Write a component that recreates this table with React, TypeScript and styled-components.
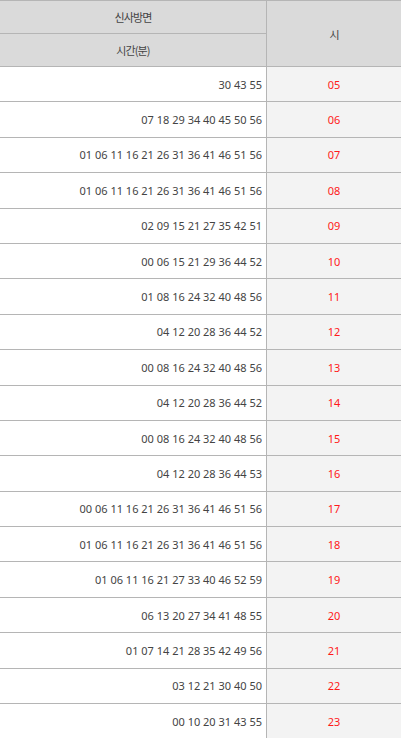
import React from 'react'
import styled, { createGlobalStyle } from 'styled-components'

const GlobalStyle = createGlobalStyle`
    html, body {
        margin: 0;
        padding: 0;
        background: #ffffff;
    }
    body {
        font-family: "Noto Sans", "Noto Sans CJK KR", sans-serif;
    }
`

const Table = styled.div`
    width: 401px;
    border-top: 1px solid #b5b5b5;
    color: #444;
`

const Head = styled.div`
    display: grid;
    grid-template-columns: 267px 1fr;
    grid-template-rows: 33px 33px;
    background-color: #dadada;
`

const HeadCell = styled.div<{ $span?: boolean }>`
    display: flex;
    align-items: center;
    justify-content: center;
    border-bottom: 1px solid #b5b5b5;
    font-family: "Noto Sans CJK KR", sans-serif;
    font-size: 11px;
    letter-spacing: -0.9px;
    color: #444;
    ${p => p.$span ? 'grid-row: 1 / span 2; grid-column: 2;' : 'border-right: 1px solid #b5b5b5; grid-column: 1;'}
`

const Row = styled.div`
    display: grid;
    grid-template-columns: 267px 1fr;
    height: 35.4px;
    box-sizing: border-box;
    border-bottom: 1px solid #b5b5b5;
`

const Minutes = styled.div`
    display: flex;
    align-items: center;
    justify-content: flex-end;
    padding-right: 4px;
    border-right: 1px solid #b5b5b5;
    font-size: 11px;
    color: #444;
    white-space: nowrap;
`

const Hour = styled.div`
    display: flex;
    align-items: center;
    justify-content: center;
    background-color: #f3f3f3;
    font-size: 11px;
    color: #ff1a1a;
`

const rows: [string, string][] = [
    ['05', '30 43 55'],
    ['06', '07 18 29 34 40 45 50 56'],
    ['07', '01 06 11 16 21 26 31 36 41 46 51 56'],
    ['08', '01 06 11 16 21 26 31 36 41 46 51 56'],
    ['09', '02 09 15 21 27 35 42 51'],
    ['10', '00 06 15 21 29 36 44 52'],
    ['11', '01 08 16 24 32 40 48 56'],
    ['12', '04 12 20 28 36 44 52'],
    ['13', '00 08 16 24 32 40 48 56'],
    ['14', '04 12 20 28 36 44 52'],
    ['15', '00 08 16 24 32 40 48 56'],
    ['16', '04 12 20 28 36 44 53'],
    ['17', '00 06 11 16 21 26 31 36 41 46 51 56'],
    ['18', '01 06 11 16 21 26 31 36 41 46 51 56'],
    ['19', '01 06 11 16 21 27 33 40 46 52 59'],
    ['20', '06 13 20 27 34 41 48 55'],
    ['21', '01 07 14 21 28 35 42 49 56'],
    ['22', '03 12 21 30 40 50'],
    ['23', '00 10 20 31 43 55'],
]

const App = () => {
    return (
        <>
            <GlobalStyle />
            <Table>
                <Head>
                    <HeadCell>신사방면</HeadCell>
                    <HeadCell $span>시</HeadCell>
                    <HeadCell>시간(분)</HeadCell>
                </Head>
                {rows.map(([hour, mins]) => (
                    <Row key={hour}>
                        <Minutes>{mins}</Minutes>
                        <Hour>{hour}</Hour>
                    </Row>
                ))}
            </Table>
        </>
    )
}

export default App
